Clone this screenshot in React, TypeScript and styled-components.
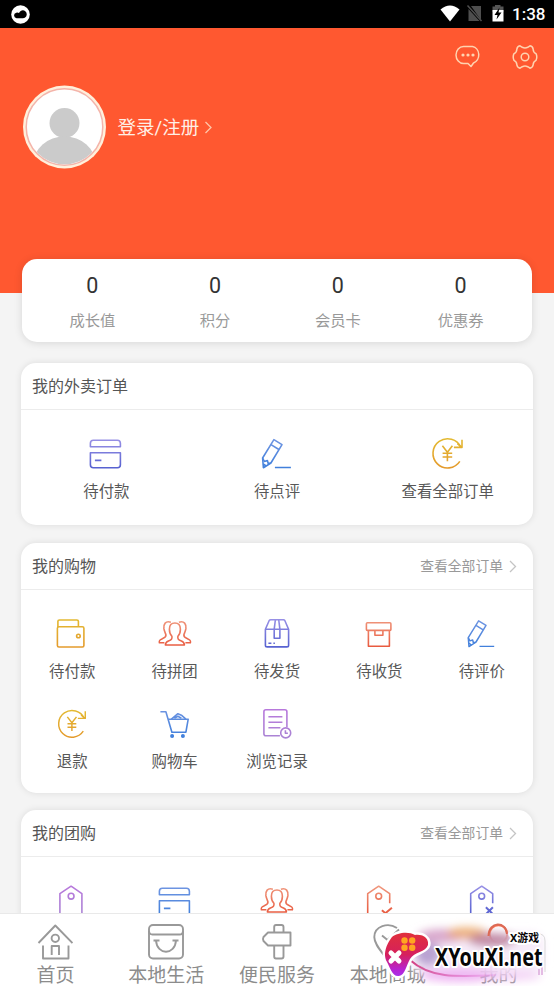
import React, { useId } from 'react';
import styled, { createGlobalStyle } from 'styled-components';

const GlobalStyle = createGlobalStyle`
  * { box-sizing: border-box; }
  body {
    margin: 0;
    background: #f4f4f4;
    font-family: Roboto, "Noto Sans CJK SC", sans-serif;
    font-weight: 400;
  }
  svg { display: block; }
`;

const Screen = styled.div`
  width: 554px;
  height: 986px;
  display: flex;
  flex-direction: column;
  overflow: hidden;
  background: #f4f4f4;
`;

const StatusBar = styled.div`
  height: 28px;
  flex: none;
  background: #000;
  color: #fff;
  display: flex;
  align-items: center;
  justify-content: space-between;
  padding: 0 9px 0 11px;
`;

const StatusIcons = styled.div`
  display: flex;
  align-items: center;
`;

const Clock = styled.span`
  width: 33px;
  margin-left: 6px;
  font-size: 17px;
  line-height: 28px;
  font-weight: 500;
  white-space: nowrap;
`;

const Scroller = styled.main`
  flex: 1;
  min-height: 0;
  overflow: hidden;
`;

const Hero = styled.header`
  height: 265px;
  background: #ff5830;
  display: flex;
  flex-direction: column;
`;

const HeroActions = styled.div`
  display: flex;
  justify-content: flex-end;
  gap: 31px;
  padding: 16px 16px 0 0;
`;

const Profile = styled.div`
  display: flex;
  align-items: center;
  margin-top: 15px;
  padding-left: 23px;
`;

const LoginText = styled.span`
  margin-left: 10.5px;
  margin-right: 5px;
  padding-top: 2px;
  font-size: 18.5px;
  line-height: 28px;
  color: #ffefe6;
`;

const StatsCard = styled.section`
  position: relative;
  height: 83px;
  margin: -34px 22px 0;
  padding: 0 10px 0 9px;
  border-radius: 15px;
  background: #fff;
  box-shadow: 0 1px 8px rgba(0, 0, 0, 0.12);
  display: grid;
  grid-template-columns: repeat(4, 1fr);
`;

const Stat = styled.div`
  display: flex;
  flex-direction: column;
  align-items: center;
`;

const StatValue = styled.span`
  margin-top: 14px;
  font-size: 21.5px;
  line-height: 26px;
  color: #333;
`;

const StatLabel = styled.span`
  margin-top: 11px;
  font-size: 15.3px;
  line-height: 22px;
  color: #999;
`;

const Card = styled.section<{ $height: number; $gap: number }>`
  height: ${(p) => p.$height}px;
  margin: ${(p) => p.$gap}px 21px 0;
  border-radius: 15px;
  background: #fff;
  box-shadow: 0 0 7px rgba(0, 0, 0, 0.1);
`;

const CardHead = styled.div`
  height: 47px;
  padding: 0 16px 0 11px;
  border-bottom: 1px solid #ececec;
  display: flex;
  align-items: center;
  justify-content: space-between;
`;

const CardTitle = styled.h2`
  margin: 0;
  padding-top: 2px;
  font-size: 16px;
  line-height: 24px;
  font-weight: 400;
  color: #555;
`;

const More = styled.span`
  display: flex;
  align-items: center;
  gap: 6px;
  font-size: 13.8px;
  line-height: 20px;
  color: #999;
`;

const Grid = styled.div<{ $columns: number }>`
  display: grid;
  grid-template-columns: repeat(${(p) => p.$columns}, 1fr);
  grid-auto-rows: 90px;
  padding-top: 26px;
`;

const Entry = styled.div`
  display: flex;
  flex-direction: column;
  align-items: center;
`;

const IconSlot = styled.div<{ $drop?: number }>`
  height: 36px;
  display: flex;
  align-items: center;
  transform: translate(-0.6px, ${(p) => p.$drop ?? -0.8}px);
`;

const EntryLabel = styled.span`
  margin-top: 9px;
  font-size: 15.4px;
  line-height: 22px;
  color: #585858;
  white-space: nowrap;
`;

const TabBar = styled.nav`
  position: relative;
  height: 73px;
  flex: none;
  border-top: 1px solid #e9e9e9;
  background: #fff;
  display: grid;
  grid-template-columns: repeat(5, 1fr);
`;

const Tab = styled.div`
  display: flex;
  flex-direction: column;
  align-items: center;
  padding-top: 10px;
`;

const TabLabel = styled.span`
  margin-top: 1.5px;
  font-size: 19px;
  line-height: 28px;
  color: #8c8c8c;
  white-space: nowrap;
`;

const Badge = styled.div`
  position: absolute;
  right: 0;
  bottom: 0;
`;

type IconName =
  | 'card' | 'pencil' | 'refund' | 'wallet' | 'people' | 'parcel'
  | 'archive' | 'cart' | 'history' | 'tag' | 'tagCheck' | 'tagCross';

const shapes: Record<IconName, React.ReactNode> = {
  card: (
    <>
      <path d="M3 11V7.5Q3 4.5 6 4.5H30Q33 4.5 33 7.5V11Z" />
      <path d="M3 17H33V29Q33 32 30 32H6Q3 32 3 29Z" />
      <path d="M7.5 24.7H14" />
    </>
  ),
  pencil: (
    <>
      <path d="M4.2 22 15.5 3.6 23.6 8.6 12.5 27 5 31.7Z" />
      <path d="M12.6 8.6 20.5 13.5M4.2 22 6 25.5 9 24.5 9.8 27.5 12.5 27M4.8 28 7.8 30" />
      <path d="M16.5 31.5H32.5" />
    </>
  ),
  refund: (
    <>
      <path d="M30.4 26.2A14.6 14.6 0 1 1 31.5 12.2" />
      <path d="M32.6 4.5V12.2H24.5M28 8.5 32 12" />
      <path d="M13 10.5 18 17 23 10.5M18 17V26M13.2 18H22.8M13.2 21.8H22.8" />
    </>
  ),
  wallet: (
    <>
      <rect x="4" y="11.5" width="26.5" height="20.3" rx="1.5" />
      <path d="M4.5 12V6Q4.5 4.8 6 4.8H23.5Q25 4.8 25 6V11" />
      <circle cx="25" cy="20.8" r="1.8" />
    </>
  ),
  people: (
    <>
      <path d="M18.5 7.8C14.5 7.8 13 10.5 13 14C13 17 14 19.5 15.5 21C16 24 15 24.5 12 25.7C9.5 26.7 9 27.5 9 29.8H28C28 27.5 27.5 26.7 25 25.7C22 24.5 21 24 21.5 21C23 19.5 24 17 24 14C24 10.5 22.5 7.8 18.5 7.8Z" />
      <path d="M14.5 7C9 5.3 7 9 7.5 13.5C8 16.5 9 17.5 9.5 19.5C10 22 8.5 22.5 6 23.5C3 24.7 2.5 25.5 3 27.5H8" />
      <path d="M22.5 7C28 5.3 30 9 29.5 13.5C29 16.5 28 17.5 27.5 19.5C27 22 28.5 22.5 31 23.5C34 24.7 34.5 25.5 34 27.5H29" />
    </>
  ),
  parcel: (
    <>
      <path d="M7 14V30Q7 31.7 8.7 31.7H28.5Q30.2 31.7 30.2 30V14L26.5 5.5Q26 4.5 25 4.5H12.3Q11.3 4.5 10.7 5.5L7 14Z" />
      <path d="M7 14H30.2M17 4.5 15.8 14V23H21.5V14L20.3 4.5M10 28H13M15 28H16.5" />
    </>
  ),
  archive: (
    <>
      <rect x="6" y="7.5" width="24.5" height="7.7" rx="1" />
      <path d="M8 15.5V31H29V15.5M14.5 15.5V20H22.5V15.5" />
    </>
  ),
  cart: (
    <>
      <path d="M4 6.5H9.5L15.5 27H29.5L31.8 14H12" />
      <path d="M15 14 21.5 8.5 25 10 29.5 14M18 13 21.5 11 25 13" />
      <circle cx="15.7" cy="30.7" r="1.2" fill="currentColor" />
      <circle cx="26.5" cy="30.7" r="1.2" fill="currentColor" />
    </>
  ),
  history: (
    <>
      <path d="M21.5 30.5H7.5Q5.5 30.5 5.5 28.5V6.5Q5.5 4.5 7.5 4.5H26.5Q28.5 4.5 28.5 6.5V22" />
      <path d="M10 11.5H24M10 17H24M10 22.5H22" />
      <circle cx="27.3" cy="27.7" r="5" />
      <path d="M27 25V28H29.5" />
    </>
  ),
  tag: (
    <>
      <path d="M6.5 36V11.5L17.7 4 28.5 11.5V36Z" />
      <circle cx="17.7" cy="14" r="2.9" />
    </>
  ),
  tagCheck: (
    <>
      <path d="M7.3 38V11.5L18.3 4 29.3 11.5V21" />
      <circle cx="18.3" cy="14" r="2.9" />
      <path d="M21.5 28 25 31 31.5 25.5" strokeWidth="2" />
    </>
  ),
  tagCross: (
    <>
      <path d="M7.3 38V11.5L18.3 4 29.3 11.5V21" />
      <circle cx="18.3" cy="14" r="2.9" />
      <path d="M22.5 25 29.5 32M29.5 25 22.5 32" strokeWidth="2" />
    </>
  ),
};

type Tone = [string, string];
const violet: Tone = ['#9a92e6', '#5560d0'];
const blue: Tone = ['#6f95e2', '#3f7fdb'];
const gold: Tone = ['#e3ba32', '#e49a2c'];
const coral: Tone = ['#f09a80', '#e8573c'];
const purple: Tone = ['#b878dc', '#aa84d4'];

function EntryIcon({ name, tone, size = 36 }: { name: IconName; tone: Tone; size?: number }) {
  const id = useId();
  return (
    <svg width={size} height={size} viewBox="0 0 36 36" fill="none" color={tone[1]}
      stroke={`url(#${id})`} strokeWidth={1.6} strokeLinejoin="round">
      <defs>
        <linearGradient id={id} gradientUnits="userSpaceOnUse" x1="0" y1="3" x2="0" y2="33">
          <stop offset="0" stopColor={tone[0]} />
          <stop offset="1" stopColor={tone[1]} />
        </linearGradient>
      </defs>
      {shapes[name]}
    </svg>
  );
}

interface EntryData {
  label?: string;
  icon: IconName;
  tone: Tone;
  size?: number;
  drop?: number;
}

const takeout: EntryData[] = [
  { label: '待付款', icon: 'card', tone: violet, drop: -0.3 },
  { label: '待点评', icon: 'pencil', tone: blue, drop: 0 },
  { label: '查看全部订单', icon: 'refund', tone: gold },
];

const shopping: EntryData[] = [
  { label: '待付款', icon: 'wallet', tone: gold },
  { label: '待拼团', icon: 'people', tone: coral },
  { label: '待发货', icon: 'parcel', tone: violet },
  { label: '待收货', icon: 'archive', tone: coral },
  { label: '待评价', icon: 'pencil', tone: blue, size: 33, drop: -0.5 },
  { label: '退款', icon: 'refund', tone: gold, size: 33 },
  { label: '购物车', icon: 'cart', tone: blue },
  { label: '浏览记录', icon: 'history', tone: purple },
];

const groupBuy: EntryData[] = [
  { icon: 'tag', tone: purple },
  { icon: 'card', tone: blue, drop: 0.7 },
  { icon: 'people', tone: coral },
  { icon: 'tagCheck', tone: coral },
  { icon: 'tagCross', tone: violet },
];

const stats = ['成长值', '积分', '会员卡', '优惠券'];

function Chevron({ color, width = 8, height = 13 }: { color: string; width?: number; height?: number }) {
  return (
    <svg width={width} height={height} viewBox="0 0 8 13" fill="none" stroke={color} strokeWidth="1.3">
      <path d="M1 1 6.5 6.5 1 12" />
    </svg>
  );
}

function Section({ title, more, items, columns, height, gap }: {
  title: string; more?: string; items: EntryData[]; columns: number; height: number; gap: number;
}) {
  return (
    <Card $height={height} $gap={gap}>
      <CardHead>
        <CardTitle>{title}</CardTitle>
        {more && <More>{more}<Chevron color="#c4c4c4" /></More>}
      </CardHead>
      <Grid $columns={columns}>
        {items.map((item, index) => (
          <Entry key={index}>
            <IconSlot $drop={item.drop}>
              <EntryIcon name={item.icon} tone={item.tone} size={item.size} />
            </IconSlot>
            {item.label && <EntryLabel>{item.label}</EntryLabel>}
          </Entry>
        ))}
      </Grid>
    </Card>
  );
}

function Avatar() {
  return (
    <svg width="84" height="84" viewBox="0 0 84 84">
      <defs>
        <clipPath id="face"><circle cx="41.5" cy="42" r="37.3" /></clipPath>
      </defs>
      <circle cx="41.5" cy="42" r="41.5" fill="#fff0dc" />
      <circle cx="41.5" cy="42" r="38.3" fill="#fff" stroke="#f4b4aa" strokeWidth="1.5" />
      <g clipPath="url(#face)" fill="#cbcbcb">
        <circle cx="41.5" cy="38" r="15" />
        <ellipse cx="41.5" cy="79" rx="31" ry="27.5" />
      </g>
    </svg>
  );
}

const tabs: { label: string; icon: React.ReactNode; color?: string }[] = [
  {
    label: '首页',
    icon: (
      <>
        <path d="M1.5 19 18.3 1.5 35.5 19M6 21.5V34.5H31.5V21.5M14.7 31V22H22V31" />
        <circle cx="18.3" cy="14.3" r="3.7" />
      </>
    ),
  },
  {
    label: '本地生活',
    icon: (
      <>
        <rect x="1" y="1" width="34" height="33.5" rx="4" />
        <path d="M1 7Q1 10.5 4.5 10.5H31.5Q35 10.5 35 7M5.5 16.5H11.5M24.5 16.5H30.5M8 16.5C9 31.5 27 31.5 28 16.5" />
      </>
    ),
  },
  {
    label: '便民服务',
    icon: (
      <path d="M15.2 8.5V3Q15.2 1 17 1H22.5Q24.5 1 24.5 3V8.5M9 8.5H31.5V21.5H9L4.5 17Q3.5 15 4.5 13ZM15.2 21.5V32.5Q15.2 34.5 17 34.5H22.5Q24.5 34.5 24.5 32.5V21.5" />
    ),
  },
  {
    label: '本地商城',
    icon: (
      <path d="M27 4C18 -2 4.500 2 4.300 13C4.200 20 11 27 16.500 34.500C22 29 27 23 28.500 17M12 11.500 17.500 16 29 5.500" />
    ),
  },
  {
    label: '我的',
    color: '#ff6842',
    icon: (
      <>
        <circle cx="17.500" cy="10" r="8.800" />
        <path d="M2 34.500C4 19 31 19 34 34.500Z" strokeOpacity="0.300" />
      </>
    ),
  },
];

function SiteBadge() {
  return (
    <svg width="184" height="71" viewBox="0 0 184 71">
      <defs>
        <linearGradient id="pad" x1="0" y1="0" x2="0" y2="1">
          <stop offset="0" stopColor="#e0303c" />
          <stop offset="0.5" stopColor="#d6205c" />
          <stop offset="0.85" stopColor="#b722d2" />
          <stop offset="1" stopColor="#a930e8" />
        </linearGradient>
        <linearGradient id="tail" x1="0" x2="1">
          <stop offset="0" stopColor="#d23c80" />
          <stop offset="1" stopColor="#e070e0" stopOpacity="0.2" />
        </linearGradient>
        <filter id="soft" x="-30%" y="-60%" width="160%" height="220%"><feGaussianBlur stdDeviation="4.5" /></filter>
      </defs>
      <g filter="url(#soft)">
        <rect x="42" y="17" width="132" height="42" rx="12" fill="#f6eaf8" fillOpacity="0.92" />
        <ellipse cx="72" cy="21" rx="24" ry="7" fill="#d9a7cc" />
        <ellipse cx="97" cy="18" rx="20" ry="6" fill="#eca968" fillOpacity="0.85" />
        <ellipse cx="122" cy="25" rx="24" ry="7" fill="#b87998" fillOpacity="0.85" />
        <ellipse cx="58" cy="39" rx="13" ry="12" fill="#a48ac4" fillOpacity="0.75" />
        <ellipse cx="90" cy="60" rx="40" ry="7" fill="#eaa0ef" fillOpacity="0.75" />
        <ellipse cx="142" cy="61" rx="29" ry="5" fill="#f1c5f3" fillOpacity="0.7" />
      </g>
      <path d="M118.500 21C119 6 136 6 137 19" fill="none" stroke="#dc6a55" strokeWidth="2" />
      <path d="M167 19Q175 18 175 26V57" fill="none" stroke="#ccc" strokeOpacity="0.7" />
      <path d="M169 60V54M172 60V52" stroke="#dba9dc" strokeWidth="1.5" />
      <path d="M40 45C60 63 84 62 126 60" fill="none" stroke="url(#tail)" strokeWidth="2" />
      <path d="M22 22C27 18 38 16 45 20C54 19 59 24 58 30C56 37 44 37 40 44C36 51 35 60 29 61C22 62 20 52 17 47C12 38 18 27 22 22Z" fill="url(#pad)" stroke="#fff" strokeWidth="5" paintOrder="stroke" strokeLinejoin="round" />
      <path d="M21 38 29 46M29 38 21 46" stroke="#fff" strokeWidth="5" strokeLinecap="round" />
      <g fill="#ffa521">
        <circle cx="34.5" cy="25.5" r="3.2" />
        <circle cx="42.2" cy="25.5" r="3.2" />
        <circle cx="34.5" cy="32.8" r="3.2" />
        <circle cx="42.2" cy="32.8" r="3.2" />
      </g>
      <g fill="#050505" stroke="#fff" strokeWidth="4" strokeLinejoin="round" paintOrder="stroke" fontWeight="700">
        <text x="140" y="27" fontSize="11" textLength="29" lengthAdjust="spacingAndGlyphs" fontFamily="'Noto Sans', 'Noto Sans CJK SC', sans-serif">X游戏</text>
        <text x="65" y="51" fontSize="25" textLength="107.5" lengthAdjust="spacingAndGlyphs" fontFamily="'Noto Sans', sans-serif">XYouXi.net</text>
      </g>
    </svg>
  );
}

export default function App() {
  return (
    <>
      <GlobalStyle />
      <Screen>
        <StatusBar>
          <svg width="19" height="19" viewBox="0 0 19 19">
            <circle cx="9.5" cy="9.5" r="9.3" fill="#fff" />
            <path d="M5.500 13.200A2.800 2.800 0 0 1 5.200 7.700Q7 7.300 8 8A4 4 0 1 1 13.800 12.800Q13 13.200 12 13.200Z" fill="#000" />
          </svg>
          <StatusIcons>
            <svg width="66" height="20" viewBox="0 0 66 20">
              <path d="M0.5 5.5Q10 -2.5 19.5 5.5L10 17.5Z" fill="#fff" />
              <path d="M31 2H41V16ZM28.5 5V17H39.5Z" fill="#4e4e4e" />
              <path d="M27.5 1.5 41.5 17" stroke="#4e4e4e" strokeWidth="1.5" />
              <path d="M52.5 2.5H55V1H60.5V2.5H63.5V8H52.5Z" fill="#555" />
              <path d="M52.5 6H63.5V17.5H52.5Z" fill="#fff" />
              <path d="M59.5 3.5 54.5 11H57.5L56.5 15.500 61.500 8.500H58.500Z" fill="#000" />
            </svg>
            <Clock>1:38</Clock>
          </StatusIcons>
        </StatusBar>

        <Scroller>
          <Hero>
            <HeroActions>
              <svg width="26" height="26" viewBox="0 0 26 26" fill="none" stroke="#ffd3b0" strokeWidth="1.5" strokeLinejoin="round">
                <path d="M8.5 2.500H17.500A7.500 8.500 0 0 1 18.500 19L16 22.500 13 19.500H8.500A7.500 8.500 0 0 1 8.500 2.500Z" />
                <g fill="#ffd3b0" stroke="none">
                  <circle cx="8" cy="11" r="1.6" />
                  <circle cx="13" cy="11" r="1.6" />
                  <circle cx="18" cy="11" r="1.6" />
                </g>
              </svg>
              <svg width="26" height="26" viewBox="0 0 26 26" fill="none" stroke="#ffd3b0" strokeWidth="1.5" strokeLinejoin="round">
                <path d="M8 1.800 10.300 3.300Q13 4.600 15.700 3.300L18 1.800Q21 2.300 21.200 5.500Q21.200 8.300 24 9.700Q25.600 13 24 16.300Q21.200 17.700 21.200 20.500Q21 23.500 18 24.200L15.700 22.700Q13 21.400 10.300 22.700L8 24.200Q5 23.500 4.800 20.500Q4.800 17.700 2 16.300Q0.400 13 2 9.700Q4.800 8.300 4.800 5.500Q5 2.300 8 1.800Z" />
                <circle cx="13" cy="13" r="3.8" />
              </svg>
            </HeroActions>
            <Profile>
              <Avatar />
              <LoginText>登录/注册</LoginText>
              <Chevron color="#ffc5a8" width={9} />
            </Profile>
          </Hero>

          <StatsCard>
            {stats.map((label) => (
              <Stat key={label}>
                <StatValue>0</StatValue>
                <StatLabel>{label}</StatLabel>
              </Stat>
            ))}
          </StatsCard>

          <Section title="我的外卖订单" items={takeout} columns={3} height={162} gap={21} />
          <Section title="我的购物" more="查看全部订单" items={shopping} columns={5} height={250} gap={18} />
          <Section title="我的团购" more="查看全部订单" items={groupBuy} columns={5} height={250} gap={17} />
        </Scroller>

        <TabBar>
          {tabs.map((tab) => (
            <Tab key={tab.label}>
              <svg width="36" height="36" viewBox="0 0 36 36" fill="none" stroke={tab.color ?? '#999'} strokeWidth="1.9" strokeLinejoin="round">
                {tab.icon}
              </svg>
              <TabLabel>{tab.label}</TabLabel>
            </Tab>
          ))}
          <Badge><SiteBadge /></Badge>
        </TabBar>
      </Screen>
    </>
  );
}
